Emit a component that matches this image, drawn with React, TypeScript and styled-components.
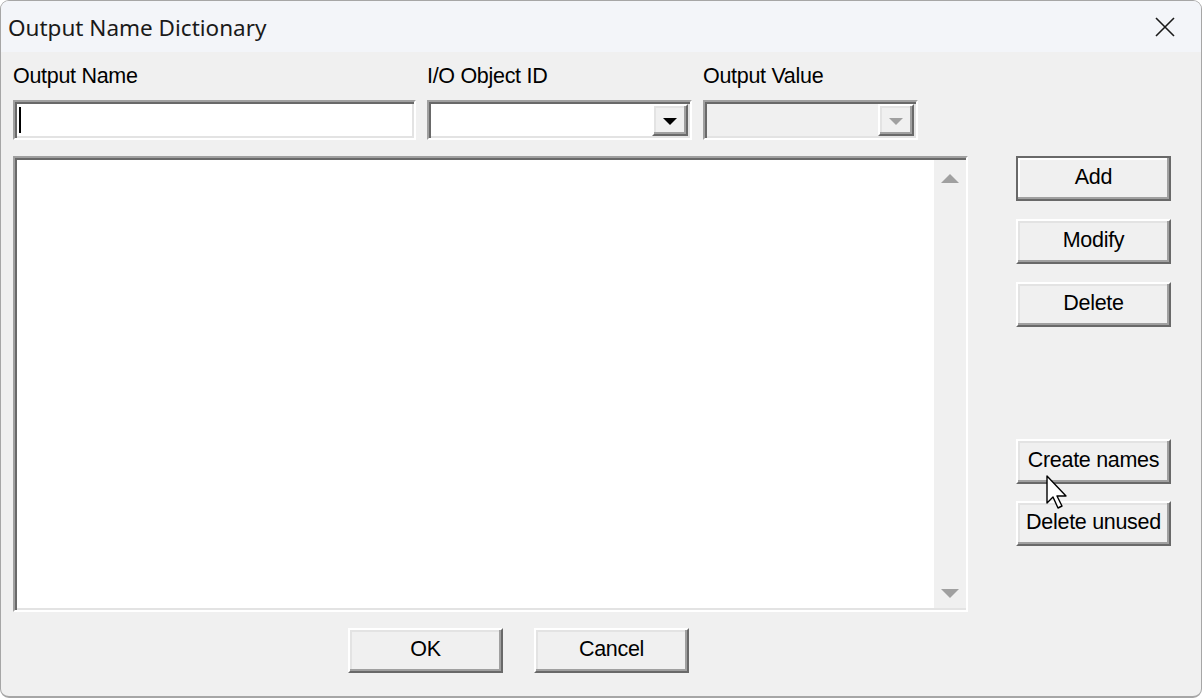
import { FC } from 'react'
import styled, { createGlobalStyle, css } from 'styled-components'

const GlobalStyle = createGlobalStyle`
	html, body {
		margin: 0;
		padding: 0;
		background: #ffffff;
	}
	#root {
		width: 1202px;
		height: 698px;
	}
`

const pixelFont = css`
	font-family: 'Liberation Sans', Arial, sans-serif;
	font-size: 21.5px;
	color: #000000;
`

const raised = css`
	border-style: solid;
	border-width: 2px;
	border-color: #ffffff #696969 #696969 #ffffff;
	box-shadow: inset -2px -2px 0 #a0a0a0, inset 2px 2px 0 #e3e3e3;
`

const sunken = css`
	border-style: solid;
	border-width: 2px;
	border-color: #a0a0a0 #ffffff #ffffff #a0a0a0;
	box-shadow: inset 2px 2px 0 #696969, inset -2px -2px 0 #e3e3e3;
`

const Window = styled.div`
	position: relative;
	box-sizing: border-box;
	width: 1202px;
	height: 698px;
	border: 1px solid #a6a6a6;
	border-bottom-width: 2px;
	border-radius: 9px;
	overflow: hidden;
	background: #f0f0f0;
	display: flex;
	flex-direction: column;
`

const TitleBar = styled.div`
	height: 51px;
	flex: none;
	display: flex;
	align-items: center;
	justify-content: space-between;
	padding-left: 7px;
	background: #f3f5f9;
`

const Title = styled.span`
	font-family: 'Noto Sans', 'Segoe UI', sans-serif;
	font-size: 22.5px;
	color: #1a1a1a;
	padding-top: 2px;
`

const CloseBox = styled.div`
	width: 70px;
	height: 51px;
	display: flex;
	align-items: center;
	justify-content: center;
	margin-right: 1px;
`

const Body = styled.div`
	flex: 1;
	display: grid;
	grid-template-columns: 955px 155px;
	column-gap: 48px;
	padding: 10px 0 0 12px;
`

const LeftColumn = styled.div`
	display: flex;
	flex-direction: column;
`

const FieldRow = styled.div`
	display: grid;
	grid-template-columns: 403px 265px 215px;
	column-gap: 11px;
`

const Field = styled.div`
	display: flex;
	flex-direction: column;
`

const Label = styled.label`
	${pixelFont};
	height: 38px;
	line-height: 28px;
	letter-spacing: -0.3px;
`

const TextBox = styled.div`
	${sunken};
	box-sizing: border-box;
	height: 40px;
	background: #ffffff;
	display: flex;
	align-items: center;
	padding-left: 4px;
`

const Caret = styled.div`
	width: 2px;
	height: 26px;
	background: #000000;
`

const Combo = styled.div<{ $disabled?: boolean }>`
	${sunken};
	box-sizing: border-box;
	height: 40px;
	background: ${p => (p.$disabled ? '#f0f0f0' : '#ffffff')};
	display: flex;
	justify-content: flex-end;
	padding: 2px;
`

const DropButton = styled.div`
	${raised};
	box-sizing: border-box;
	width: 36px;
	background: #f0f0f0;
	display: flex;
	align-items: center;
	justify-content: center;
	padding-top: 2px;
`

const Arrow = styled.div<{ $color: string; $up?: boolean; $size?: number }>`
	width: 0;
	height: 0;
	border-left: ${p => p.$size ?? 7}px solid transparent;
	border-right: ${p => p.$size ?? 7}px solid transparent;
	${p =>
		p.$up
			? `border-bottom: ${p.$size ?? 7}px solid ${p.$color};`
			: `border-top: ${p.$size ?? 7}px solid ${p.$color};`}
`

const ListBox = styled.div`
	${sunken};
	box-sizing: border-box;
	margin-top: 16px;
	height: 456px;
	background: #ffffff;
	display: flex;
	justify-content: flex-end;
	padding: 2px 0 2px 0;
`

const ScrollBar = styled.div`
	width: 32px;
	background: #f0f0f0;
	display: flex;
	flex-direction: column;
	justify-content: space-between;
	align-items: center;
	padding: 14px 0 10px;
`

const Footer = styled.div`
	display: flex;
	gap: 31px;
	padding: 16px 0 0 335px;
`

const Button = styled.button<{ $default?: boolean }>`
	${pixelFont};
	box-sizing: border-box;
	width: 155px;
	height: 45px;
	padding: 0 0 2px;
	background: #f0f0f0;
	cursor: default;
	letter-spacing: -0.3px;
	${raised};
	${p =>
		p.$default &&
		css`
			border: 2px solid #696969;
			box-shadow: inset -2px -2px 0 #a0a0a0, inset 2px 2px 0 #ffffff;
		`}
`

const RightColumn = styled.div`
	display: flex;
	flex-direction: column;
	padding-top: 94px;
`

const ButtonGroup = styled.div<{ $gap: number; $top?: number }>`
	display: flex;
	flex-direction: column;
	gap: ${p => p.$gap}px;
	margin-top: ${p => p.$top ?? 0}px;
`

const Pointer = styled.svg`
	position: absolute;
	left: 1045px;
	top: 474px;
`

const App: FC = () => {
	return (
		<>
			<GlobalStyle />
			<Window>
				<TitleBar>
					<Title>Output Name Dictionary</Title>
					<CloseBox>
						<svg width="22" height="22" viewBox="0 0 22 22">
							<path d="M2 2 L20 20 M20 2 L2 20" stroke="#1a1a1a" strokeWidth="1.6" />
						</svg>
					</CloseBox>
				</TitleBar>
				<Body>
					<LeftColumn>
						<FieldRow>
							<Field>
								<Label>Output Name</Label>
								<TextBox>
									<Caret />
								</TextBox>
							</Field>
							<Field>
								<Label>I/O Object ID</Label>
								<Combo>
									<DropButton>
										<Arrow $color="#000000" />
									</DropButton>
								</Combo>
							</Field>
							<Field>
								<Label>Output Value</Label>
								<Combo $disabled>
									<DropButton>
										<Arrow $color="#a0a0a0" />
									</DropButton>
								</Combo>
							</Field>
						</FieldRow>
						<ListBox>
							<ScrollBar>
								<Arrow $color="#a0a0a0" $up $size={9} />
								<Arrow $color="#a0a0a0" $size={9} />
							</ScrollBar>
						</ListBox>
						<Footer>
							<Button>OK</Button>
							<Button>Cancel</Button>
						</Footer>
					</LeftColumn>
					<RightColumn>
						<ButtonGroup $gap={18}>
							<Button $default>Add</Button>
							<Button>Modify</Button>
							<Button>Delete</Button>
						</ButtonGroup>
						<ButtonGroup $gap={17} $top={112}>
							<Button>Create names</Button>
							<Button>Delete unused</Button>
						</ButtonGroup>
					</RightColumn>
				</Body>
				<Pointer width="22" height="38" viewBox="0 0 22 38">
					<path
						d="M1 1 L1 28 L7 22 L12 33 L16 31 L11 21 L20 21 Z"
						fill="#ffffff"
						stroke="#000000"
						strokeWidth="1.4"
						strokeLinejoin="round"
					/>
				</Pointer>
			</Window>
		</>
	)
}

export default App
